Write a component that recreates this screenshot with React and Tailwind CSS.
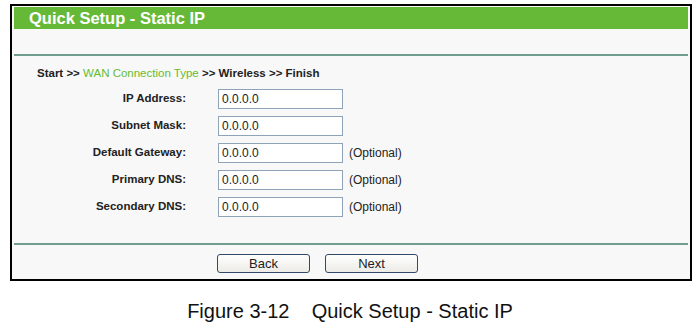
export default function App() {
  const rows = [
    { label: "IP Address:", opt: false },
    { label: "Subnet Mask:", opt: false },
    { label: "Default Gateway:", opt: true },
    { label: "Primary DNS:", opt: true },
    { label: "Secondary DNS:", opt: true },
  ];
  return (
    <div className="w-[700px] h-[325px] bg-white overflow-hidden" style={{ fontFamily: '"Liberation Sans", Arial, sans-serif' }}>
      <div className="ml-[10px] mt-[4px] w-[682px] h-[277px] border-2 border-black bg-[#f8f8f8] px-[2px] pt-[1px] flex flex-col">
        <div className="h-[22px] bg-[#66b936] text-white font-bold text-[16.5px] leading-[22px] pl-[15px]">
          Quick Setup - Static IP
        </div>
        <div className="h-[25px]" />
        <div className="h-[2px] bg-[#6f9e8c]" />
        <div className="pl-[23px] pt-[10px] h-[33px] text-[11.5px] font-bold leading-[14px] text-[#222]">
          Start &gt;&gt; <span className="font-normal text-[#66bb33]">WAN Connection Type</span> &gt;&gt; Wireless &gt;&gt; Finish
        </div>
        <div className="flex flex-col gap-[7px]">
          {rows.map((r) => (
            <div key={r.label} className="flex items-center h-[20px]">
              <div className="w-[172px] text-right text-[11.5px] font-bold text-[#222]">{r.label}</div>
              <div className="ml-[32px] w-[125px] h-[20px] border border-[#8ea3b8] bg-white text-[12px] leading-[19px] pl-[3px] text-[#222]">0.0.0.0</div>
              {r.opt && <div className="ml-[6px] text-[12px] text-[#222]">(Optional)</div>}
            </div>
          ))}
        </div>
        <div className="h-[26px]" />
        <div className="h-[2px] bg-[#6f9e8c]" />
        <div className="flex pl-[203px] pt-[9px] gap-[15px]">
          <div className="w-[93px] h-[19px] rounded-[3px] border border-[#33496b] bg-gradient-to-b from-[#ffffff] to-[#ecebe6] text-[13px] leading-[17px] text-center text-[#222]">Back</div>
          <div className="w-[93px] h-[19px] rounded-[3px] border border-[#33496b] bg-gradient-to-b from-[#ffffff] to-[#ecebe6] text-[13px] leading-[17px] text-center text-[#222]">Next</div>
        </div>
      </div>
      <div className="mt-[19px] text-center text-[20px] leading-[22px] text-[#111] whitespace-pre">
        {"Figure 3-12    Quick Setup - Static IP"}
      </div>
    </div>
  );
}
